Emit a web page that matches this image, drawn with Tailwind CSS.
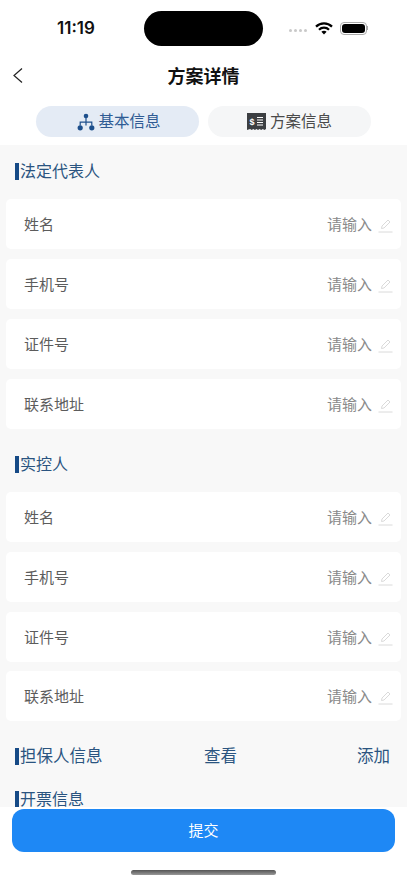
<!DOCTYPE html>
<html lang="zh-CN">
<head>
	<meta charset="UTF-8">
	<meta name="viewport" content="width=device-width, initial-scale=1.0">
	<title>方案详情</title>
	<script src="https://cdn.jsdelivr.net/npm/@tailwindcss/browser@4"></script>
</head>
<body class="bg-white overflow-hidden font-['Inter','Noto_Sans_CJK_SC',sans-serif]">
	<div class="flex flex-col w-[407px] h-[883px] overflow-hidden">
		<!-- Status bar -->
		<div class="flex items-center h-[57px] shrink-0 pb-[1px]">
			<div class="w-[144px] pl-[57px] text-[17px] font-semibold text-[#111] leading-none">11:19</div>
			<div class="w-[119px] h-[35px] rounded-full bg-black"></div>
			<div class="flex items-center pl-[26px]">
				<div class="flex gap-[2px] mt-[5px]">
					<span class="w-[3px] h-[3px] rounded-full bg-[#c9c9c9]"></span>
					<span class="w-[3px] h-[3px] rounded-full bg-[#c9c9c9]"></span>
					<span class="w-[3px] h-[3px] rounded-full bg-[#c9c9c9]"></span>
					<span class="w-[3px] h-[3px] rounded-full bg-[#c9c9c9]"></span>
				</div>
				<svg class="ml-[8px]" width="18" height="13" viewBox="0 0 18 13">
					<path d="M1 4.6a11.4 11.4 0 0 1 16 0" fill="none" stroke="#000" stroke-width="2.2"/>
					<path d="M4 7.7a7 7 0 0 1 10 0" fill="none" stroke="#000" stroke-width="2.2"/>
					<path d="M6.4 9.8a3.5 3.5 0 0 1 5.2 0L9 12.6z" fill="#000"/>
				</svg>
				<div class="ml-[7px] w-[27px] h-[13px] rounded-[4px] border border-[#aaa] p-[1px]">
					<div class="w-full h-full rounded-[3px] bg-black"></div>
				</div>
				<div class="w-[1px] h-[4px] bg-[#aaa]"></div>
			</div>
		</div>

		<!-- Header -->
		<div class="relative flex items-center justify-center h-[38px] shrink-0">
			<svg class="absolute left-[12px] top-[10px]" width="12" height="17" viewBox="0 0 12 17">
				<path d="M10 1.5L2 8.5l8 7" fill="none" stroke="#222" stroke-width="1.2"/>
			</svg>
			<h1 class="text-[18px] font-bold text-[#111]">方案详情</h1>
		</div>

		<!-- Tabs -->
		<div class="flex justify-center gap-[9px] h-[50px] pt-[11px] shrink-0">
			<div class="flex items-center justify-center gap-[3px] w-[163px] h-[31px] pl-[3px] rounded-full bg-[#e4ebf5] text-[15.5px] text-[#2f5b94]">
				<svg width="18" height="18" viewBox="0 0 18 18" fill="#1d4f8c">
					<circle cx="9" cy="3" r="2.3"/>
					<circle cx="3.2" cy="14.8" r="2.6"/>
					<circle cx="14.8" cy="14.8" r="2.6"/>
					<path d="M8.4 4.5h1.2v4h5.8v4h-1.2V9.7H9.6v2.8H8.4V9.7H3.8v2.8H2.6v-4h5.8z"/>
				</svg>
				<span>基本信息</span>
			</div>
			<div class="flex items-center justify-center gap-[4px] w-[163px] h-[31px] rounded-full bg-[#f5f6f7] text-[15.5px] text-[#4a4a4a]">
				<svg width="19" height="19" viewBox="0 0 19 19">
					<path d="M0 1h19v16l-1.6 1-1.6-1-1.6 1-1.6-1-1.6 1-1.5-1-1.6 1-1.6-1-1.6 1-1.6-1L0 18z" fill="#3c3f42"/>
					<text x="2.5" y="12.5" font-size="9" font-weight="700" fill="#fff" font-family="Liberation Sans">$</text>
					<path d="M10 5.5h6M10 8h6M10 10.5h6M10 13h6" stroke="#fff" stroke-width="1"/>
				</svg>
				<span>方案信息</span>
			</div>
		</div>

		<!-- Form content -->
		<div class="flex-1 min-h-0 overflow-hidden bg-[#f8f8f8] px-[6px] pt-[15px]">
			<div class="flex items-center h-[22px] pl-[9px] text-[16px] text-[#2a5480]">
				<span class="w-[4px] h-[17px] bg-[#164a86]"></span><span class="ml-[1px]">法定代表人</span>
			</div>
			<div class="flex flex-col gap-[10px] mt-[17px]">
				<div class="flex items-center h-[50px] rounded-[5px] bg-white pt-[3px] pl-[18px] pr-[8px] text-[15px]">
					<span class="flex-1 text-[#5c5c5c]">姓名</span><span class="text-[#8a8a8a]">请输入</span>
					<svg class="ml-[6px]" width="15" height="15" viewBox="0 0 15 15" fill="none" stroke="#d6d6d6" stroke-width="0.9"><path d="M3.5 10.5l.5-2.5L10 2l2 2-6 6z"/><path d="M0.5 14h14"/></svg>
				</div>
				<div class="flex items-center h-[50px] rounded-[5px] bg-white pt-[3px] pl-[18px] pr-[8px] text-[15px]">
					<span class="flex-1 text-[#5c5c5c]">手机号</span><span class="text-[#8a8a8a]">请输入</span>
					<svg class="ml-[6px]" width="15" height="15" viewBox="0 0 15 15" fill="none" stroke="#d6d6d6" stroke-width="0.9"><path d="M3.5 10.5l.5-2.5L10 2l2 2-6 6z"/><path d="M0.5 14h14"/></svg>
				</div>
				<div class="flex items-center h-[50px] rounded-[5px] bg-white pt-[2px] pl-[18px] pr-[8px] text-[15px]">
					<span class="flex-1 text-[#5c5c5c]">证件号</span><span class="text-[#8a8a8a]">请输入</span>
					<svg class="ml-[6px]" width="15" height="15" viewBox="0 0 15 15" fill="none" stroke="#d6d6d6" stroke-width="0.9"><path d="M3.5 10.5l.5-2.5L10 2l2 2-6 6z"/><path d="M0.5 14h14"/></svg>
				</div>
				<div class="flex items-center h-[50px] rounded-[5px] bg-white pt-[2px] pl-[18px] pr-[8px] text-[15px]">
					<span class="flex-1 text-[#5c5c5c]">联系地址</span><span class="text-[#8a8a8a]">请输入</span>
					<svg class="ml-[6px]" width="15" height="15" viewBox="0 0 15 15" fill="none" stroke="#d6d6d6" stroke-width="0.9"><path d="M3.5 10.5l.5-2.5L10 2l2 2-6 6z"/><path d="M0.5 14h14"/></svg>
				</div>
			</div>

			<div class="flex items-center h-[22px] mt-[24px] pl-[9px] text-[16px] text-[#2a5480]">
				<span class="w-[4px] h-[17px] bg-[#164a86]"></span><span class="ml-[1px]">实控人</span>
			</div>
			<div class="flex flex-col gap-[10px] mt-[17px]">
				<div class="flex items-center h-[50px] rounded-[5px] bg-white pt-[3px] pl-[18px] pr-[8px] text-[15px]">
					<span class="flex-1 text-[#5c5c5c]">姓名</span><span class="text-[#8a8a8a]">请输入</span>
					<svg class="ml-[6px]" width="15" height="15" viewBox="0 0 15 15" fill="none" stroke="#d6d6d6" stroke-width="0.9"><path d="M3.5 10.5l.5-2.5L10 2l2 2-6 6z"/><path d="M0.5 14h14"/></svg>
				</div>
				<div class="flex items-center h-[50px] rounded-[5px] bg-white pt-[3px] pl-[18px] pr-[8px] text-[15px]">
					<span class="flex-1 text-[#5c5c5c]">手机号</span><span class="text-[#8a8a8a]">请输入</span>
					<svg class="ml-[6px]" width="15" height="15" viewBox="0 0 15 15" fill="none" stroke="#d6d6d6" stroke-width="0.9"><path d="M3.5 10.5l.5-2.5L10 2l2 2-6 6z"/><path d="M0.5 14h14"/></svg>
				</div>
				<div class="flex items-center h-[50px] rounded-[5px] bg-white pt-[3px] pl-[18px] pr-[8px] text-[15px]">
					<span class="flex-1 text-[#5c5c5c]">证件号</span><span class="text-[#8a8a8a]">请输入</span>
					<svg class="ml-[6px]" width="15" height="15" viewBox="0 0 15 15" fill="none" stroke="#d6d6d6" stroke-width="0.9"><path d="M3.5 10.5l.5-2.5L10 2l2 2-6 6z"/><path d="M0.5 14h14"/></svg>
				</div>
				<div class="flex items-center h-[50px] rounded-[5px] bg-white pt-[3px] pl-[18px] pr-[8px] text-[15px] -mt-[1px]">
					<span class="flex-1 text-[#5c5c5c]">联系地址</span><span class="text-[#8a8a8a]">请输入</span>
					<svg class="ml-[6px]" width="15" height="15" viewBox="0 0 15 15" fill="none" stroke="#d6d6d6" stroke-width="0.9"><path d="M3.5 10.5l.5-2.5L10 2l2 2-6 6z"/><path d="M0.5 14h14"/></svg>
				</div>
			</div>

			<div class="flex items-center h-[22px] mt-[24px] pl-[9px] pr-[11px] text-[16.5px] text-[#2a5480]">
				<span class="w-[4px] h-[17px] bg-[#164a86]"></span><span class="ml-[1px] flex-1">担保人信息</span>
				<span class="w-[153px]">查看</span>
				<span>添加</span>
			</div>

			<div class="flex items-center h-[22px] mt-[21px] pl-[9px] text-[16px] text-[#2a5480]">
				<span class="w-[4px] h-[17px] bg-[#164a86]"></span><span class="ml-[1px]">开票信息</span>
			</div>
		</div>

		<!-- Submit -->
		<div class="shrink-0 h-[76px] bg-white pt-[2px]">
			<div class="mx-[12px] flex items-center justify-center h-[43px] pt-[2px] rounded-[12px] bg-[#1e88f5] text-[15px] text-white">提交</div>
			<div class="mx-auto mt-[18px] w-[145px] h-[5px] rounded-full bg-gradient-to-b from-[#555] to-[#999]"></div>
		</div>
	</div>
</body>
</html>
